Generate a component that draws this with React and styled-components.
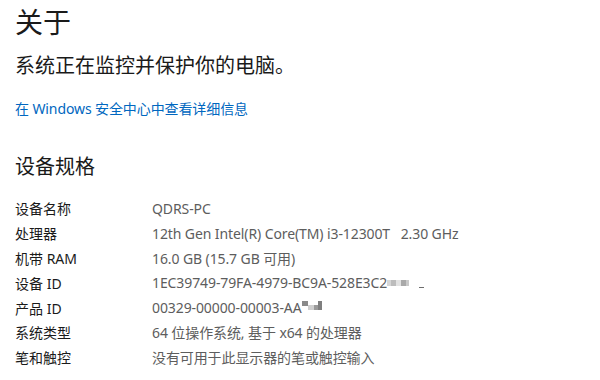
import React from 'react'
import styled, { createGlobalStyle } from 'styled-components'

const Global = createGlobalStyle`
    html, body {
        margin: 0;
        background: #ffffff;
    }
    body {
        font-family: 'Noto Sans', 'Noto Sans CJK SC', sans-serif;
        color: #1a1a1a;
    }
`

const Page = styled.main`
    padding: 2px 15px 0;
    display: flex;
    flex-direction: column;
`
const Title = styled.h1`
    margin: 0;
    font-size: 28px;
    font-weight: 400;
    line-height: 40px;
`
const Status = styled.p`
    margin: 10px 0 0;
    font-size: 20px;
    line-height: 28px;
`
const Link = styled.a`
    margin-top: 19px;
    font-size: 14px;
    line-height: 20px;
    color: #0067c0;
    text-decoration: none;
    letter-spacing: -0.1px;
`
const Heading = styled.h2`
    margin: 34px 0 0;
    font-size: 20px;
    font-weight: 400;
    line-height: 28px;
`
const Specs = styled.dl`
    margin: 15px 0 0;
    display: grid;
    grid-template-columns: 137px 1fr;
    grid-auto-rows: 24.8px;
    align-items: center;
    font-size: 14px;
`
const Label = styled.dt`
    color: #1a1a1a;
`
const Value = styled.dd`
    margin: 0;
    color: #5d5d5d;
    display: flex;
    align-items: center;
    white-space: pre;
    letter-spacing: -0.1px;
`
const Blur = styled.span`
    display: inline-flex;
    align-items: ${p => p.$align || 'center'};
`
const Cell = styled.span`
    display: inline-block;
    width: ${p => p.$w || 5}px;
    height: ${p => p.$h || 6}px;
    background: ${p => p.$c};
    margin-top: ${p => p.$dy || 0}px;
    margin-left: ${p => p.$ml || 0}px;
`

const specs = [
    ['设备名称', 'QDRS-PC'],
    ['处理器', '12th Gen Intel(R) Core(TM) i3-12300T   2.30 GHz'],
    ['机带 RAM', '16.0 GB (15.7 GB 可用)'],
    ['设备 ID', '1EC39749-79FA-4979-BC9A-528E3C2', 'id'],
    ['产品 ID', '00329-00000-00003-AA', 'product'],
    ['系统类型', '64 位操作系统, 基于 x64 的处理器'],
    ['笔和触控', '没有可用于此显示器的笔或触控输入'],
]

function Redacted({ kind }) {
    if (kind === 'id') {
        return (
            <Blur>
                <Cell $c="#d6d6d6" $w={4} />
                <Cell $c="#bcbcbc" />
                <Cell $c="#e2e2e2" />
                <Cell $c="#a9a9a9" />
                <Cell $c="#c9c9c9" $w={3} />
                <Cell $c="#6d6d6d" $w={5} $h={1} $dy={10} $ml={10} />
            </Blur>
        )
    }
    if (kind === 'product') {
        return (
            <Blur $align="flex-start">
                <Cell $c="#8a8a8a" $w={6} $h={5} $dy={-4} />
                <Cell $c="#cfcfcf" $w={6} $h={5} />
                <Cell $c="#9a9a9a" $w={4} $h={5} />
                <Cell $c="#7f7f7f" $w={4} $h={9} $dy={-4} />
            </Blur>
        )
    }
    return null
}

export default function App() {
    return (
        <>
            <Global />
            <Page>
                <Title>关于</Title>
                <Status>系统正在监控并保护你的电脑。</Status>
                <Link href="#">在 Windows 安全中心中查看详细信息</Link>
                <Heading>设备规格</Heading>
                <Specs>
                    {specs.map(([label, value, redact]) => (
                        <React.Fragment key={label}>
                            <Label>{label}</Label>
                            <Value>
                                {value}
                                {redact && <Redacted kind={redact} />}
                            </Value>
                        </React.Fragment>
                    ))}
                </Specs>
            </Page>
        </>
    )
}
